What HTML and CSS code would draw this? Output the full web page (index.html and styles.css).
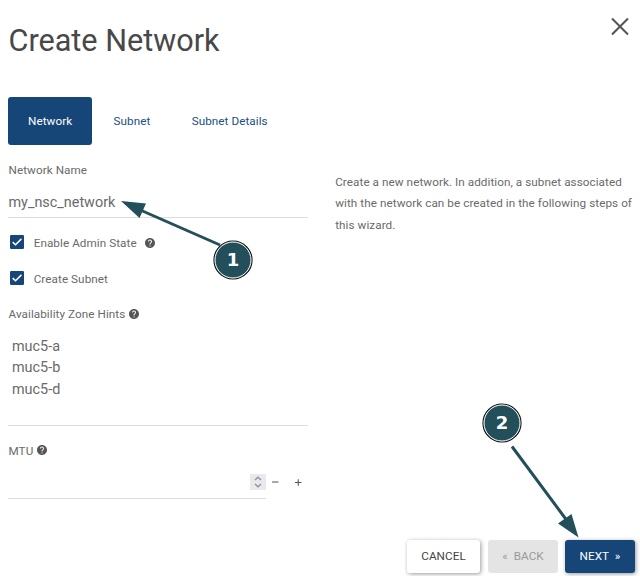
FILE: index.html
```html
<!DOCTYPE html>
<html lang="en">
<head>
<meta charset="utf-8">
<title>Create Network</title>
<link rel="stylesheet" href="styles.css">
</head>
<body>
<svg class="defs" aria-hidden="true">
  <symbol id="help" viewBox="2 2 20 20"><path d="M12 2C6.48 2 2 6.48 2 12s4.48 10 10 10 10-4.48 10-10S17.52 2 12 2zm1 17h-2v-2h2v2zm2.07-7.75l-.9.92C13.45 12.9 13 13.5 13 15h-2v-.5c0-1.1.45-2.1 1.17-2.83l1.24-1.26c.37-.36.59-.86.59-1.41 0-1.1-.9-2-2-2s-2 .9-2 2H8c0-2.21 1.79-4 4-4s4 1.79 4 4c0 .88-.36 1.68-.93 2.25z"/></symbol>
  <symbol id="check" viewBox="0 0 14 14"><rect width="14" height="14" rx="1.2" fill="#164577"/><path d="M2.7 7.1 5.5 9.8 11.4 3.9" fill="none" stroke="#fff" stroke-width="1.5"/></symbol>
</svg>
<main class="dialog">
  <header class="header">
    <h1 class="title">Create Network</h1>
    <svg class="close" viewBox="0 0 18 18"><path d="M1 .5 17 16.5M17 .5 1 16.5"/></svg>
  </header>
  <nav class="tabs">
    <a class="tab active">Network</a>
    <a class="tab">Subnet</a>
    <a class="tab">Subnet Details</a>
  </nav>
  <div class="content">
    <form class="form">
      <div class="label">Network Name</div>
      <div class="input">my_nsc_network</div>
      <div class="option first"><svg class="box"><use href="#check"/></svg><span>Enable Admin State</span><svg class="help"><use href="#help"/></svg></div>
      <div class="option"><svg class="box"><use href="#check"/></svg><span>Create Subnet</span></div>
      <div class="label zones-label">Availability Zone Hints<svg class="help"><use href="#help"/></svg></div>
      <div class="zones"><div>muc5-a</div><div>muc5-b</div><div>muc5-d</div></div>
      <div class="label mtu-label">MTU<svg class="help"><use href="#help"/></svg></div>
      <div class="number">
        <div class="field"><svg class="spinner" viewBox="0 0 16 16"><path d="M5 6 8 3.2 11 6M5 10 8 12.8 11 10"/></svg></div>
        <svg class="steps" viewBox="0 0 42 33"><path d="M6 16H12.5M29 16.5H35.5M32.25 13.25V19.75"/></svg>
      </div>
    </form>
    <p class="description">Create a new network. In addition, a subnet associated with the network can be created in the following steps of this wizard.</p>
  </div>
  <footer class="footer">
    <div class="button cancel">CANCEL</div>
    <div class="button back">«&nbsp; BACK</div>
    <div class="button next">NEXT &nbsp;»</div>
  </footer>
</main>
<svg class="arrows" viewBox="0 0 640 576">
  <path class="line" d="M220 245 138 209M512 446.5 568 522"/>
  <path class="head" d="M121 201 146 203.5 139.5 218ZM578.5 537.5 558 523.5 571.5 514Z"/>
  <g class="marker"><circle cx="233" cy="260" r="19"/><circle class="ring" cx="233" cy="260" r="18"/><text x="233" y="266">1</text></g>
  <g class="marker"><circle cx="502" cy="423" r="19"/><circle class="ring" cx="502" cy="423" r="18"/><text x="502" y="429">2</text></g>
</svg>
</body>
</html>
```
FILE: styles.css
```css
* { box-sizing: border-box; }
body {
  margin: 0;
  width: 640px;
  height: 576px;
  overflow: hidden;
  background: #fff;
  color: #6a6a6a;
  font: 11.7px/21.6px Roboto, sans-serif;
  letter-spacing: 0.07px;
}
.defs { position: absolute; width: 0; height: 0; }
.dialog { height: 576px; display: flex; flex-direction: column; }
.header { height: 97px; padding: 18px 11px 0 8.5px; display: flex; justify-content: space-between; }
.title { margin: 0; font-size: 30.6px; line-height: 45px; font-weight: 400; color: #484848; letter-spacing: 0; }
.close { width: 18px; height: 18px; stroke: #555; stroke-width: 2.1; }
.tabs { display: flex; padding-left: 8px; height: 48px; }
.tab { padding: 0 20px; margin-right: 1.3px; line-height: 48px; color: #205083; }
.active { background: #164577; color: #fff; border-radius: 3px; }
.content { display: flex; height: 395px; padding-left: 8px; }
.form { width: 300px; padding-top: 15px; }
.label { height: 22px; padding-left: .5px; display: flex; align-items: center; gap: 4px; }
.help { width: 10px; height: 10px; fill: #555; }
.input { height: 36px; padding: 10px 0 0 .5px; border-bottom: 1px solid #ddd; font-size: 14.4px; letter-spacing: 0; }
.option { height: 36px; display: flex; align-items: center; padding-left: 2px; }
.option.first { margin-top: 6px; }
.option span { margin-left: 9.7px; padding-top: 3px; }
.box { width: 14px; height: 14px; }
.option .help { margin-left: 8px; margin-top: 1px; }
.zones-label { margin-top: 8px; }
.zones-label .help { margin-bottom: 3px; }
.zones { height: 100px; padding: 9.7px 4px 0; border-bottom: 1px solid #ddd; font-size: 14.4px; letter-spacing: 0; }
.mtu-label { margin-top: 15px; }
.mtu-label .help { margin-bottom: 4px; }
.number { display: flex; margin-top: 3px; }
.field { width: 258px; height: 33px; border-bottom: 1px solid #ddd; display: flex; justify-content: flex-end; align-items: center; }
.spinner { width: 16px; height: 16px; background: #e9e9ed; fill: none; stroke: #8f8f9d; stroke-width: 1.3; }
.steps { width: 42px; height: 33px; stroke: #555; stroke-width: 1.1; }
.description { width: 300px; margin: 26.7px 0 0 27.2px; }
.footer { display: flex; padding-left: 407px; gap: 7px; }
.button { height: 33px; line-height: 33px; border-radius: 3px; text-align: center; }
.cancel { width: 73px; margin-right: 1px; color: #444; box-shadow: 1px 1px 4px rgba(0,0,0,.4); }
.back { width: 70px; background: #e4e4e4; color: #999; }
.next { width: 70px; background: #164577; color: #fff; box-shadow: 1px 1px 4px rgba(0,0,0,.4); }
.arrows { position: absolute; inset: 0; width: 640px; height: 576px; }
.line { stroke: #234f5b; stroke-width: 3; fill: none; }
.head { fill: #234f5b; }
.marker circle { fill: #234f5b; stroke: #111; stroke-width: 1.2; }
.marker .ring { stroke: #fff; stroke-width: 1; }
.marker text { fill: #fff; font: bold 18px "DejaVu Sans", sans-serif; letter-spacing: 0; text-anchor: middle; }
```
